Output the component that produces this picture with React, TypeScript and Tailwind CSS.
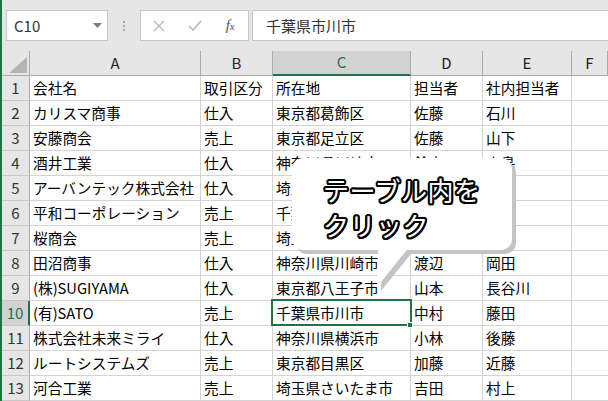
import React from "react";

const rows: string[][] = [
  ["会社名", "取引区分", "所在地", "担当者", "社内担当者"],
  ["カリスマ商事", "仕入", "東京都葛飾区", "佐藤", "石川"],
  ["安藤商会", "売上", "東京都足立区", "佐藤", "山下"],
  ["酒井工業", "仕入", "神奈川県川崎市", "鈴木", "小島"],
  ["アーバンテック株式会社", "仕入", "埼玉県川口市", "高橋", "中島"],
  ["平和コーポレーション", "売上", "千葉県千葉市", "田中", "小林"],
  ["桜商会", "売上", "埼玉県所沢市", "伊藤", "井上"],
  ["田沼商事", "仕入", "神奈川県川崎市", "渡辺", "岡田"],
  ["(株)SUGIYAMA", "仕入", "東京都八王子市", "山本", "長谷川"],
  ["(有)SATO", "売上", "千葉県市川市", "中村", "藤田"],
  ["株式会社未来ミライ", "仕入", "神奈川県横浜市", "小林", "後藤"],
  ["ルートシステムズ", "売上", "東京都目黒区", "加藤", "近藤"],
  ["河合工業", "売上", "埼玉県さいたま市", "吉田", "村上"],
];

const cols = ["A", "B", "C", "D", "E", "F"];
const gridCols = "grid grid-cols-[28px_171px_72px_138px_72px_89px_1fr]";

export default function App() {
  return (
    <div className="relative w-[608px] h-[401px] overflow-hidden bg-white border-l-2 border-[#217346] font-['Noto_Sans_CJK_JP',sans-serif] text-black">
      {/* formula bar */}
      <div className="h-[51px] bg-[#e6e6e6] flex items-start pt-[10px] pl-[4px] gap-0">
        <div className="w-[102px] h-[31px] bg-white border border-[#c6c6c6] flex items-center pl-[7px] pr-[5px] justify-between">
          <span className="text-[15px] text-[#333] leading-none">C10</span>
          <svg width="9" height="6" viewBox="0 0 9 6">
            <path d="M0 0 L9 0 L4.5 5 Z" fill="#7a7a7a" />
          </svg>
        </div>
        <div className="w-[32px] h-[31px] flex flex-col items-center justify-center gap-[2px]">
          <div className="w-[2px] h-[2px] bg-[#a8a8a8]" />
          <div className="w-[2px] h-[2px] bg-[#a8a8a8]" />
          <div className="w-[2px] h-[2px] bg-[#a8a8a8]" />
        </div>
        <div className="w-[109px] h-[31px] bg-white border border-[#c6c6c6] flex items-center">
          <div className="w-[36px] flex justify-center">
            <svg width="12" height="12" viewBox="0 0 12 12">
              <path d="M1 1 L11 11 M11 1 L1 11" stroke="#b8b8b8" strokeWidth="1.4" />
            </svg>
          </div>
          <div className="w-[36px] flex justify-center">
            <svg width="14" height="12" viewBox="0 0 14 12">
              <path d="M1 6 L5 10 L13 1" stroke="#b8b8b8" strokeWidth="1.6" fill="none" />
            </svg>
          </div>
          <div className="w-[36px] flex justify-center">
            <span className="font-['Liberation_Serif',serif] italic text-[15px] text-[#555] leading-none">
              f<span className="text-[11px]">x</span>
            </span>
          </div>
        </div>
        <div className="ml-[3px] flex-1 h-[31px] bg-white border border-[#c6c6c6] border-r-0 flex items-center pl-[13px]">
          <span className="text-[15px] text-[#333] leading-none">千葉県市川市</span>
        </div>
      </div>

      {/* column headers */}
      <div className={`${gridCols} h-[25px] bg-[#e6e6e6]`}>
        <div className="relative border-r border-b border-[#ababab]">
          <svg className="absolute left-[7px] top-[6px]" width="18" height="16" viewBox="0 0 18 16">
            <path d="M0 16 L18 16 L18 0 Z" fill="#b4b4b4" />
          </svg>
        </div>
        {cols.map((c) => (
          <div
            key={c}
            className={
              c === "C"
                ? "flex items-center justify-center bg-[#d2d2d2] border-r border-[#ababab] border-b-2 border-b-[#217346] text-[15px] text-[#217346]"
                : "flex items-center justify-center border-r border-b border-[#ababab] text-[15px] text-[#222]"
            }
          >
            {c}
          </div>
        ))}
      </div>

      {/* rows */}
      {rows.map((r, i) => {
        const sel = i === 9;
        return (
          <div key={i} className={`${gridCols} h-[25px]`}>
            <div
              className={
                sel
                  ? "flex items-center justify-center bg-[#d2d2d2] border-b border-b-[#c8c8c8] border-r-2 border-r-[#217346] text-[15px] text-[#217346]"
                  : "flex items-center justify-center bg-[#e6e6e6] border-b border-b-[#c8c8c8] border-r border-r-[#ababab] text-[15px] text-[#333]"
              }
            >
              {i + 1}
            </div>
            {r.map((v, j) => (
              <div
                key={j}
                className="flex items-center pl-[3px] border-r border-b border-[#d4d4d4] text-[14.7px] whitespace-nowrap overflow-hidden leading-none"
              >
                {v}
              </div>
            ))}
            <div className="border-b border-[#d4d4d4]" />
          </div>
        );
      })}

      {/* selection */}
      <div className="absolute left-[269px] top-[299px] w-[141px] h-[27px] border-2 border-[#217346] pointer-events-none" />
      <div className="absolute left-[405px] top-[322px] w-[6px] h-[6px] bg-[#217346] border border-white pointer-events-none" />

      {/* callout */}
      <svg className="absolute left-[-2px] top-0 pointer-events-none" width="608" height="401" viewBox="0 0 608 401">
        <g fill="#c4c4c4">
          <rect x="296" y="162" width="220" height="92" rx="11" />
          <path d="M382 250 L414 250 L381 291 Z" />
        </g>
        <g fill="#ffffff">
          <rect x="292" y="158" width="220" height="92" rx="11" />
          <path d="M378 246 L410 246 L377 287 Z" />
        </g>
      </svg>
      <div className="absolute left-[321px] top-[172px] text-[26px] leading-[35px] font-normal tracking-[0.5px] text-white [text-shadow:2px_0_#000,-2px_0_#000,0_2px_#000,0_-2px_#000,1.5px_1.5px_#000,-1.5px_1.5px_#000,1.5px_-1.5px_#000,-1.5px_-1.5px_#000,1px_2px_#000,-1px_2px_#000,1px_-2px_#000,-1px_-2px_#000,2px_1px_#000,-2px_1px_#000,2px_-1px_#000,-2px_-1px_#000] pointer-events-none">
        <div>テーブル内を</div>
        <div>クリック</div>
      </div>
    </div>
  );
}
